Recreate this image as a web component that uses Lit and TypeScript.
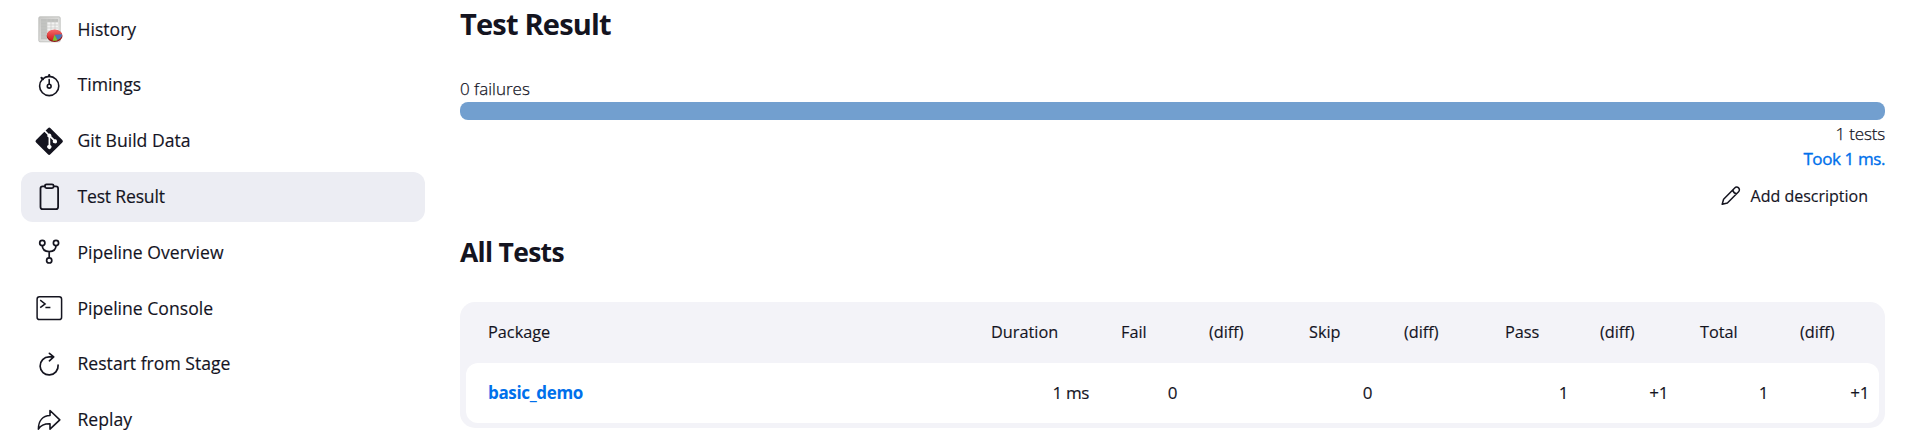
import { LitElement, html, css, svg } from "lit";
import { customElement } from "lit/decorators.js";

const icons: Record<string, unknown> = {
  history: svg`
    <defs>
      <linearGradient id="frame" x1="0" y1="0" x2="1" y2="1"><stop offset="0" stop-color="#c9c9c7"/><stop offset="1" stop-color="#eeeeec"/></linearGradient>
      <linearGradient id="pie" x1="0" y1="0" x2="0" y2="1"><stop offset="0" stop-color="#f46a6a"/><stop offset="1" stop-color="#d01c1c"/></linearGradient>
    </defs>
    <rect x="2.800" y=".8" width="21.400" height="25" rx="1.200" fill="url(#frame)" stroke="#b9bab7" stroke-width=".8"/>
    <rect x="5" y="3" width="17" height="20.500" fill="#f3f3f2"/>
    <path d="M5 3h17v3H5zM5 3h6v20.500H5z" fill="#bfc0be"/>
    <path d="M5 6h17M5 9h17M5 12h17M5 15h17M5 18h17M5 21h17M11 3v20.500M15 3v20.500M19 3v20.500" stroke="#c8c9c7" stroke-width=".7" fill="none"/>
    <ellipse cx="18.600" cy="19.900" rx="7.900" ry="6" fill="#8f1616"/>
    <ellipse cx="18.500" cy="19" rx="7.600" ry="5.600" fill="url(#pie)"/>
    <path d="M18.500 18.800L26 18.300Q26.200 21.800 21.500 24Z" fill="#4a78b8"/>
    <path d="M18.500 18.800L21.600 24.200Q19.400 25.100 16.600 24.700Z" fill="#73c935"/>`,
  timings: svg`<g fill="none" stroke="currentColor" stroke-width="1.600" stroke-linecap="round">
    <circle cx="13.200" cy="14" r="9.600"/><path d="M13.200 7.500v4.500"/><path d="M5.500 5.800l1.400 1.400M13.200 3.200v1" stroke-width="2.200"/><circle cx="13.200" cy="14.200" r="1.900"/></g>`,
  git: svg`<path transform="translate(.2)" fill="currentColor" d="M26.100 11.900 14.300.2a1.700 1.700 0 0 0-2.500 0L9.400 2.600l3.100 3.100a2.050 2.050 0 0 1 2.600 2.650l3 3a2.070 2.070 0 1 1-1.250 1.170L14.050 9.700v7.350a2.070 2.070 0 1 1-1.700-.06V9.550a2.070 2.070 0 0 1-1.120-2.710L8.160 3.780-.1 11.900a1.700 1.700 0 0 0 0 2.500l11.800 11.800a1.700 1.700 0 0 0 2.500 0L26.100 14.400a1.700 1.700 0 0 0 0-2.500z"/>`,
  clipboard: svg`<g fill="none" stroke="currentColor" stroke-width="1.800" stroke-linejoin="round"><path d="M9 2.400H6.700a2.200 2.200 0 0 0-2.200 2.200v18.400A2.200 2.200 0 0 0 6.700 25.200h13.200a2.200 2.200 0 0 0 2.200-2.200V4.600A2.200 2.200 0 0 0 19.900 2.400h-2.300"/><rect x="9" y=".3" width="8.600" height="3.800" rx="1.500"/></g>`,
  fork: svg`<g fill="none" stroke="currentColor" stroke-width="1.700"><circle cx="6.300" cy="4" r="2.600"/><circle cx="20" cy="4" r="2.600"/><circle cx="13.200" cy="21.400" r="2.600"/><path d="M6.300 6.600c0 3.700 2.700 6 6.900 6s6.800-2.300 6.800-6M13.200 12.600v6.200"/></g>`,
  console: svg`<g fill="none" stroke="currentColor" stroke-width="1.500"><rect x="1.100" y="1.800" width="24.500" height="22.800" rx="2.400"/><path d="M4.200 5.200 9.100 8.900 4.200 12.700M9.400 12.500h5"/></g>`,
  restart: svg`<g fill="none" stroke="currentColor" stroke-width="1.700" stroke-linecap="round" stroke-linejoin="round"><path d="M22.100 14.200A9 9 0 1 1 13.100 5.900L17.500 5.900M13.400 2.300l4.300 3.600-4.300 3.900"/></g>`,
  replay: svg`<path fill="none" stroke="currentColor" stroke-width="1.600" stroke-linejoin="round" d="M14 3.500v5C7 8.700 2.400 13.500 2.400 22.200 4.800 18 8.700 16.600 14 16.700v5.500l9.800-9.400Z"/>`,
  pencil: svg`<g fill="none" stroke="currentColor" stroke-width="1.500" stroke-linejoin="round"><path d="M1.200 18.300 2.600 13.300 13.700 1.900a2.750 2.750 0 0 1 3.900 3.900L6.400 17ZM11.800 4q.6 3.100 3.700 3.800"/></g>`,
};

const nav = [
  ["history", "History"],
  ["timings", "Timings"],
  ["git", "Git Build Data"],
  ["clipboard", "Test Result"],
  ["fork", "Pipeline Overview"],
  ["console", "Pipeline Console"],
  ["restart", "Restart from Stage"],
  ["replay", "Replay"],
];
const columns = ["Package", "Duration", "Fail", "(diff)", "Skip", "(diff)", "Pass", "(diff)", "Total", "(diff)"];
const rows = [["basic_demo", "1 ms", "0", "", "0", "", "1", "+1", "1", "+1"]];

@customElement("app-root")
export class AppRoot extends LitElement {
  static styles = css`
    :host { display: flex; height: 447px; overflow: hidden; background: #fff; color: #14141f;
      font: 500 17px/24px "Open Sans", "Noto Sans", sans-serif; }
    .side { width: 404px; padding: 4.200px 0 0 21px; display: flex; flex-direction: column; gap: 5.800px; flex: none; font-size: 17.600px; }
    .item { flex: none; height: 50px; border-radius: 12px; display: flex; align-items: center; padding-left: 14.500px; gap: 16px; }
    .item.active { background: #ecedf3; }
    .active .label { letter-spacing: -.2px; }
    .label { padding-bottom: 1px; -webkit-text-stroke: .15px currentColor; }
    .icon { width: 26px; height: 26px; flex: none; overflow: visible; }
    .main { margin-left: 35px; width: 1425px; flex: none; display: flex; flex-direction: column; }
    h1, h2 { margin: 0; font-weight: 700; }
    h1 { font-size: 29px; line-height: 40px; height: 77px; padding-top: 4px; box-sizing: border-box; letter-spacing: -.8px; }
    h2 { font-size: 26.500px; line-height: 36px; margin-top: 26px; height: 68px; letter-spacing: -.7px; }
    .light { font-weight: 300; -webkit-text-stroke: .25px currentColor; }
    .bar { height: 18px; border-radius: 8px; background: #729fcf; margin-top: 1px; }
    .right { text-align: right; }
    .total { margin-top: 2px; letter-spacing: -.15px; }
    .took { color: #0070eb; line-height: 26px; letter-spacing: -.4px; -webkit-text-stroke: .35px currentColor; }
    .add { display: flex; justify-content: flex-end; align-items: center; gap: 11px; padding-right: 17px; font-size: 16px; height: 24px; margin-top: 12px; -webkit-text-stroke: .15px currentColor; }
    .pencil { width: 19px; height: 20px; overflow: visible; }
    .table { background: #f3f3f8; border-radius: 15px; padding: 0 6px 5px; }
    .row { display: grid; grid-template-columns: 503px 130px 88px 100px 95px 101px 95px 100px 100px 101px; align-items: center; }
    .head { height: 61px; font-size: 16.300px; -webkit-text-stroke: .15px currentColor; }
    .head span { padding: 0 0 2px 22px; }
    .body { height: 60px; background: #fff; border-radius: 12px; text-align: right; }
    .body span { padding: 0 10px 1px 0; }
    .body .num { letter-spacing: -.4px; -webkit-text-stroke: .15px currentColor; }
    .body .name { text-align: left; padding-left: 22px; color: #0070eb; font-weight: 700; letter-spacing: -.35px; }
  `;

  private icon(name: string, cls = "icon", box = "0 0 26 26") {
    return html`<svg class=${cls} viewBox=${box}>${icons[name]}</svg>`;
  }

  render() {
    return html`
      <nav class="side">
        ${nav.map(([i, label]) => html`<div class="item ${i === "clipboard" ? "active" : ""}">${this.icon(i)}<span class="label">${label}</span></div>`)}
      </nav>
      <main class="main">
        <h1>Test Result</h1>
        <div class="light">0 failures</div>
        <div class="bar"></div>
        <div class="light right total">1 tests</div>
        <div class="right took">Took 1 ms.</div>
        <div class="add">${this.icon("pencil", "pencil", "0 0 19 20")}<span>Add description</span></div>
        <h2>All Tests</h2>
        <div class="table">
          <div class="row head">${columns.map((c) => html`<span>${c}</span>`)}</div>
          ${rows.map((r) => html`<div class="row body">${r.map((c, i) => html`<span class=${i ? "num" : "name"}>${c}</span>`)}</div>`)}
        </div>
      </main>`;
  }
}
